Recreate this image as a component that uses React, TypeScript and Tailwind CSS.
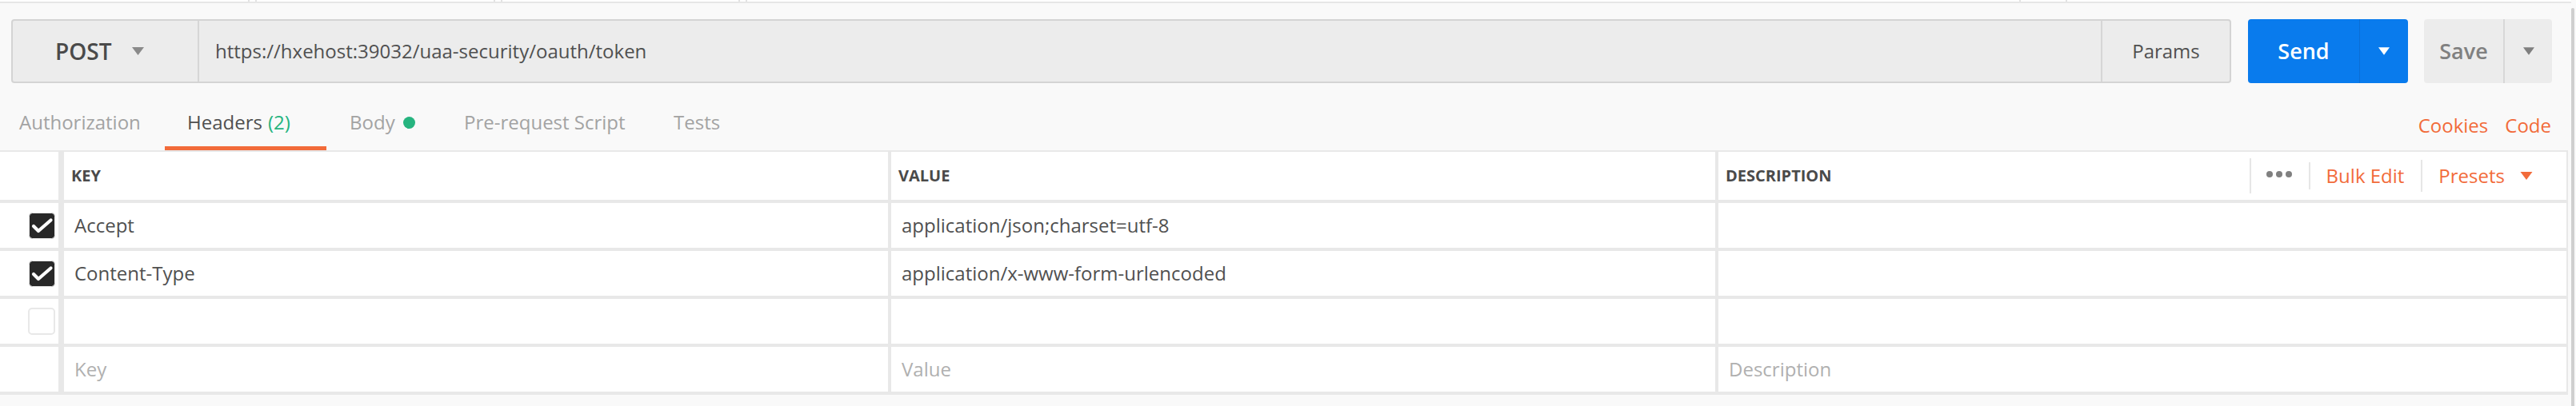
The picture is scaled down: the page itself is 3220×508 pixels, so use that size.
import React from "react";

const tabs = [
  { label: "Authorization", cls: "w-[206px] pl-[24px] border-transparent text-[#a3a3a3]" },
  { label: "Headers", cls: "w-[202px] pl-[28px] border-[#f26b3a] text-[#505050]", count: "(2)" },
  { label: "Body", cls: "w-[143px] pl-[29px] border-transparent text-[#a3a3a3]", dot: true },
  { label: "Pre-request Script", cls: "w-[261px] pl-[29px] border-transparent text-[#a3a3a3]" },
  { label: "Tests", cls: "pl-[30px] border-transparent text-[#a3a3a3]" },
];

const rows = [
  { box: "on", key: "Accept", value: "application/json;charset=utf-8", desc: "" },
  { box: "on", key: "Content-Type", value: "application/x-www-form-urlencoded", desc: "" },
  { box: "off", key: "", value: "", desc: "" },
  { box: "none", key: "Key", value: "Value", desc: "Description", placeholder: true },
];

function Caret({ color, w = 15, h = 10 }: { color: string; w?: number; h?: number }) {
  return (
    <svg width={w} height={h} viewBox="0 0 15 10">
      <path d="M0 0 L15 0 L7.5 10 Z" fill={color} />
    </svg>
  );
}

function CheckBox({ on }: { on: boolean }) {
  if (!on) {
    return <div className="w-[34px] h-[34px] rounded-[5px] border-2 border-[#e8e8e8] bg-white" />;
  }
  return (
    <svg width="33" height="33" viewBox="0 0 33 33">
      <rect x="0.5" y="0.5" width="32" height="32" rx="4" fill="#282828" stroke="#e6e6e6" />
      <path d="M6 17 L12 23 L27.5 9.5" fill="none" stroke="#ffffff" strokeWidth="4.2" strokeLinecap="round" strokeLinejoin="round" />
    </svg>
  );
}

export default function App() {
  return (
    <div className="w-[3220px] h-[508px] overflow-hidden bg-[#f9f9f9] font-['Open_Sans',sans-serif] flex">
      <div className="w-[3214px] flex flex-col">
        {/* remnant of the tab strip above */}
        <div className="flex h-[2px] bg-white">
          <div className="w-[312px] border-r-2 border-[#e2e2e2]" />
          <div className="w-[9px] border-r-2 border-[#e2e2e2]" />
          <div className="w-[298px] border-r-2 border-[#e2e2e2]" />
          <div className="w-[9px] border-r-2 border-[#e2e2e2]" />
          <div className="w-[297px] border-r-2 border-[#e2e2e2]" />
          <div className="w-[9px] border-r-2 border-[#e2e2e2]" />
          <div className="w-[1592px] border-r-2 border-[#e2e2e2]" />
          <div className="w-[58px] border-r-2 border-[#e2e2e2]" />
        </div>
        <div className="h-[2px] bg-[#e6e6e6]" />

        {/* request line */}
        <div className="flex mt-[20px] pl-[14px] h-[80px]">
          <div className="w-[2775px] flex rounded-[4px] border-2 border-[#d4d4d4] bg-[#ececec]">
            <div className="w-[233px] shrink-0 flex items-center pl-[53px] border-r-2 border-[#d6d6d6]">
              <span className="text-[28px] font-semibold text-[#4a4a4a]">POST</span>
              <span className="ml-[26px] flex">
                <Caret color="#8a8a8a" />
              </span>
            </div>
            <div className="flex-1 flex items-center pl-[20px] text-[24px] text-[#505050]">
              https://hxehost:39032/uaa-security/oauth/token
            </div>
            <div className="w-[161px] shrink-0 flex items-center justify-center border-l-2 border-[#d6d6d6] text-[24px] text-[#505050]">
              Params
            </div>
          </div>
          <div className="ml-[21px] w-[200px] flex rounded-[4px] bg-[#097bed]">
            <div className="w-[139px] flex items-center justify-center text-[27px] font-semibold text-white">Send</div>
            <div className="flex-1 flex items-center justify-center border-l border-[#0a6ed6]">
              <Caret color="#ffffff" w={14} />
            </div>
          </div>
          <div className="ml-[20px] w-[160px] flex rounded-[4px] bg-[#ececec]">
            <div className="w-[99px] flex items-center justify-center text-[27px] font-semibold text-[#808080]">Save</div>
            <div className="flex-1 flex items-center justify-center border-l-2 border-[#d8d8d8]">
              <Caret color="#7f7f7f" w={14} />
            </div>
          </div>
        </div>

        {/* tabs */}
        <div className="flex h-[84px]">
          {tabs.map((t) => (
            <div key={t.label} className={`flex items-center pt-[19px] border-b-[5px] text-[24px] ${t.cls}`}>
              <span>{t.label}</span>
              {t.count && <span className="ml-[7px] text-[#26b47f]">{t.count}</span>}
              {t.dot && <span className="ml-[10px] w-[15px] h-[15px] rounded-full bg-[#26b47f]" />}
            </div>
          ))}
          <div className="ml-auto flex items-center gap-[21px] pr-[25px] pt-[27px] pb-[5px] text-[24px] text-[#f26b3a]">
            <span>Cookies</span>
            <span>Code</span>
          </div>
        </div>

        {/* headers table */}
        <div className="w-[3210px] border-t-2 border-r-2 border-[#e8e8e8] bg-white">
          <div className="flex h-[64px] border-b-4 border-[#e8e8e8] text-[20px] font-bold text-[#4a4a4a]">
            <div className="w-[80px] border-r-[7px] border-[#e8e8e8]" />
            <div className="w-[1034px] flex items-center pl-[9px] border-r-4 border-[#e8e8e8]">KEY</div>
            <div className="w-[1034px] flex items-center pl-[9px] border-r-4 border-[#e8e8e8]">VALUE</div>
            <div className="flex-1 flex items-center pl-[9px]">
              <span>DESCRIPTION</span>
              <div className="ml-auto flex items-center pr-[42px] text-[24px] font-normal text-[#f26b3a]">
                <div className="w-[2px] h-[44px] bg-[#e6e6e6]" />
                <div className="ml-[19px] flex gap-[4px] -mt-[4px]">
                  <span className="w-[8px] h-[8px] rounded-full bg-[#808080]" />
                  <span className="w-[8px] h-[8px] rounded-full bg-[#808080]" />
                  <span className="w-[8px] h-[8px] rounded-full bg-[#808080]" />
                </div>
                <div className="ml-[21px] w-[2px] h-[34px] bg-[#e6e6e6]" />
                <span className="ml-[20px]">Bulk Edit</span>
                <div className="ml-[21px] w-[2px] h-[40px] bg-[#e6e6e6]" />
                <span className="ml-[20px]">Presets</span>
                <span className="ml-[19px] flex">
                  <Caret color="#f26b3a" w={16} />
                </span>
              </div>
            </div>
          </div>
          {rows.map((r, i) => (
            <div
              key={i}
              className={`flex h-[60px] border-b-4 border-[#e8e8e8] text-[24px] ${r.placeholder ? "text-[#b0b0b0]" : "text-[#505050]"}`}
            >
              <div className="w-[80px] flex items-center justify-end pr-[4px] border-r-[7px] border-[#e8e8e8]">
                {r.box !== "none" && <CheckBox on={r.box === "on"} />}
              </div>
              <div className="w-[1034px] flex items-center pl-[13px] border-r-4 border-[#e8e8e8]">{r.key}</div>
              <div className="w-[1034px] flex items-center pl-[13px] border-r-4 border-[#e8e8e8]">{r.value}</div>
              <div className="flex-1 flex items-center pl-[13px]">{r.desc}</div>
            </div>
          ))}
        </div>
      </div>
      <div className="mt-[10px] w-[4px] h-[498px] rounded-t-[3px] bg-[#cfcfcf]" />
    </div>
  );
}
